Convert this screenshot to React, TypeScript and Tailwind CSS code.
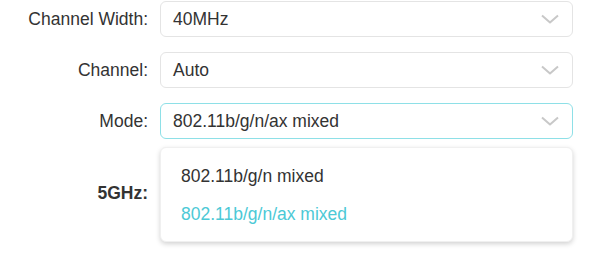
function Chevron() {
  return (
    <svg width="18" height="10" viewBox="0 0 18 10" fill="none" className="shrink-0">
      <path d="M1 1.5 L9 8.5 L17 1.5" stroke="#c8c8c8" strokeWidth="2" strokeLinejoin="round" />
    </svg>
  )
}

const rows = [
  { label: 'Channel Width:', value: '40MHz' },
  { label: 'Channel:', value: 'Auto' },
  { label: 'Mode:', value: '802.11b/g/n/ax mixed', active: true },
]

export default function App() {
  return (
    <div className="relative w-[595px] h-[258px] bg-white text-[17.5px] text-[#333] font-['Liberation_Sans',Arial,sans-serif] overflow-hidden">
      <div className="flex flex-col gap-[15px] pt-px">
        {rows.map((row) => (
          <div key={row.label} className="flex items-center gap-3">
            <div className="w-[148px] text-right">{row.label}</div>
            <div
              className={
                'flex items-center justify-between w-[413px] h-[36px] pl-3 pr-[13px] rounded-md bg-white border ' +
                (row.active ? 'border-[#8ee0e7]' : 'border-[#e4e4e4]')
              }
            >
              <span>{row.value}</span>
              <Chevron />
            </div>
          </div>
        ))}

        <div className="flex items-center gap-3 mt-[26px]">
          <div className="w-[148px] text-right font-bold">5GHz:</div>
        </div>
      </div>

      {/* open mode menu */}
      <div className="absolute left-[160px] top-[147px] w-[413px] h-[95px] bg-white rounded-md border border-[#f0f0f0] shadow-[0_2px_5px_rgba(0,0,0,0.18)] pt-[9px]">
        <div className="h-[38px] flex items-center pl-5">802.11b/g/n mixed</div>
        <div className="h-[38px] flex items-center pl-5 text-[#4cc9d6]">802.11b/g/n/ax mixed</div>
      </div>
    </div>
  )
}
